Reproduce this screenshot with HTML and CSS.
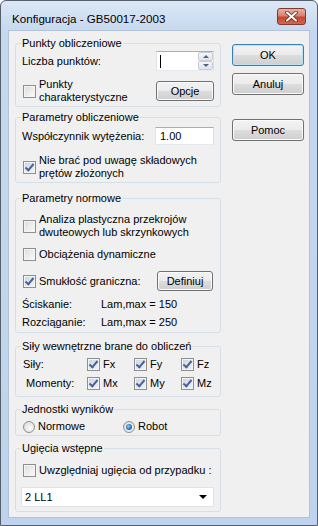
FILE: index.html
```html
<!DOCTYPE html>
<html lang="pl">

<head>
  <meta charset="UTF-8">
  <title>Konfiguracja - GB50017-2003</title>
  <link rel="stylesheet" href="styles.css">
</head>

<body>
  <div class="window">
    <div class="titlebar">
      <span class="title">Konfiguracja - GB50017-2003</span>
      <span class="close">
        <svg width="13" height="11" viewBox="0 0 13 11">
          <path d="M2 1.5 L11 9.5 M11 1.5 L2 9.5" stroke="#5a2a22" stroke-width="3.6" stroke-linecap="round" />
          <path d="M2 1.5 L11 9.5 M11 1.5 L2 9.5" stroke="#fff" stroke-width="2" stroke-linecap="round" />
        </svg>
      </span>
    </div>

    <div class="client">
      <div class="groups">

        <fieldset class="group g-points">
          <legend>Punkty obliczeniowe</legend>
          <div class="row">
            <span>Liczba punktów:</span>
            <div class="spin">
              <span class="caret"></span>
              <div class="spin-btns">
                <span class="spin-btn"><i class="arr-up"></i></span>
                <span class="spin-btn"><i class="arr-down"></i></span>
              </div>
            </div>
          </div>
          <div class="row row-chars">
            <label class="chk"><span class="box"></span><span>Punkty<br>charakterystyczne</span></label>
            <button class="btn btn-small">Opcje</button>
          </div>
        </fieldset>

        <fieldset class="group g-calc">
          <legend>Parametry obliczeniowe</legend>
          <div class="row">
            <span>Współczynnik wytężenia:</span>
            <div class="textbox">1.00</div>
          </div>
          <label class="chk chk-bars"><span class="box on"></span><span>Nie brać pod uwagę składowych<br>prętów złożonych</span></label>
        </fieldset>

        <fieldset class="group g-code">
          <legend>Parametry normowe</legend>
          <label class="chk chk-plastic"><span class="box"></span><span>Analiza plastyczna przekrojów<br>dwuteowych lub skrzynkowych</span></label>
          <label class="chk chk-dyn"><span class="box"></span><span>Obciążenia dynamiczne</span></label>
          <div class="row row-slender">
            <label class="chk"><span class="box on"></span><span>Smukłość graniczna:</span></label>
            <button class="btn btn-def">Definiuj</button>
          </div>
          <div class="lam lam-first"><span>Ściskanie:</span><span>Lam,max = 150</span></div>
          <div class="lam lam-second"><span>Rozciąganie:</span><span>Lam,max = 250</span></div>
        </fieldset>

        <fieldset class="group g-forces">
          <legend>Siły wewnętrzne brane do obliczeń</legend>
          <div class="forces">
            <span>Siły:</span>
            <label class="chk"><span class="box on"></span><span>Fx</span></label>
            <label class="chk"><span class="box on"></span><span>Fy</span></label>
            <label class="chk"><span class="box on"></span><span>Fz</span></label>
          </div>
          <div class="forces forces-moments">
            <span class="moments-label">Momenty:</span>
            <label class="chk"><span class="box on"></span><span>Mx</span></label>
            <label class="chk"><span class="box on"></span><span>My</span></label>
            <label class="chk"><span class="box on"></span><span>Mz</span></label>
          </div>
        </fieldset>

        <fieldset class="group g-units">
          <legend>Jednostki wyników</legend>
          <div class="radios">
            <label class="chk"><span class="radio"></span><span>Normowe</span></label>
            <label class="chk"><span class="radio on"></span><span>Robot</span></label>
          </div>
        </fieldset>

        <fieldset class="group g-defl">
          <legend>Ugięcia wstępne</legend>
          <label class="chk chk-defl"><span class="box"></span><span>Uwzględniaj ugięcia od przypadku :</span></label>
          <div class="select">
            <span>2 LL1</span>
            <i class="arr-drop"></i>
          </div>
        </fieldset>

      </div>

      <div class="buttons">
        <button class="btn btn-ok">OK</button>
        <button class="btn btn-cancel">Anuluj</button>
        <button class="btn btn-help">Pomoc</button>
      </div>
    </div>
  </div>
</body>

</html>
```

FILE: styles.css
```css
body {
  margin: 0;
  background: #fff;
  font-family: "Liberation Sans", Arial, sans-serif;
  font-size: 11px;
  line-height: 13px;
  color: #000;
}

.window {
  width: 318px;
  height: 526px;
  box-sizing: border-box;
  border: 1px solid #56606c;
  border-radius: 6px 6px 0 0;
  background: linear-gradient(#dbe7f6, #c6d8ef 30px, #bfd3ec);
  display: flex;
  flex-direction: column;
}

.titlebar {
  height: 29px;
  display: flex;
  justify-content: space-between;
  align-items: flex-start;
  padding: 0 11px;
}

.title {
  font-size: 11.6px;
  margin-top: 11px;
}

.close {
  margin-top: 7px;
  width: 29px;
  height: 17px;
  box-sizing: border-box;
  border: 1px solid #7d3a2e;
  border-radius: 3px;
  background: linear-gradient(#e8b1a4, #d8836f 45%, #c5482f 55%, #d2674d);
  display: flex;
  align-items: center;
  justify-content: center;
}

.client {
  margin: 0 7px;
  height: 488px;
  box-sizing: border-box;
  border: 1px solid #b3c3d7;
  background: #f0f0f0;
  padding: 6px 6px 0 6px;
  display: flex;
  gap: 11px;
}

.groups {
  width: 206px;
  display: flex;
  flex-direction: column;
}

.group {
  margin: 0;
  padding: 0 6px;
  border: 1px solid #d5dfe5;
  border-radius: 3px;
  min-width: 0;
}

.group legend {
  padding: 0 1px;
  margin-left: -1px;
  line-height: 13px;
}

.row {
  display: flex;
  justify-content: space-between;
  align-items: center;
}

.chk {
  display: flex;
  align-items: center;
  gap: 3px;
}

.box {
  width: 13px;
  height: 13px;
  box-sizing: border-box;
  border: 1px solid #8e8f8f;
  background: linear-gradient(135deg, #dcdcdc, #fbfbfb);
  box-shadow: inset 0 0 0 1px #f4f4f4;
  margin-left: 1px;
  flex-shrink: 0;
  position: relative;
}

.box.on {
  background: linear-gradient(135deg, #c9d3e0, #f3f6fa);
}

.box.on::after {
  content: "";
  position: absolute;
  left: 3px;
  top: 0px;
  width: 3px;
  height: 7px;
  border: solid #4a6296;
  border-width: 0 2px 2px 0;
  transform: rotate(40deg);
}

.radio {
  width: 12px;
  height: 12px;
  box-sizing: border-box;
  border: 1px solid #8e8f8f;
  border-radius: 50%;
  background: radial-gradient(circle at 60% 60%, #fbfbfb, #d4d4d4);
  margin-left: 1px;
  flex-shrink: 0;
  position: relative;
}

.radio.on::after {
  content: "";
  position: absolute;
  left: 2px;
  top: 2px;
  width: 6px;
  height: 6px;
  border-radius: 50%;
  background: radial-gradient(circle at 40% 40%, #8ad2f5, #1d6fb3 60%, #15446e);
}

.btn {
  width: 72px;
  height: 22px;
  padding: 0;
  box-sizing: border-box;
  border: 1px solid #707070;
  border-radius: 3px;
  background: linear-gradient(#f2f2f2, #ebebeb 50%, #dddddd 50%, #cfcfcf);
  box-shadow: inset 0 0 0 1px #fcfcfc;
  font-family: inherit;
  font-size: 11px;
  color: #000;
}

.btn-small {
  width: 58px;
  height: 20px;
}

.btn-def {
  width: 56px;
  height: 20px;
  margin-right: 1px;
}

.spin {
  width: 58px;
  height: 20px;
  box-sizing: border-box;
  border: 1px solid #abadb3;
  border-color: #abadb3 #dbdfe6 #e3e9ef #e2e3ea;
  background: #fff;
  display: flex;
  justify-content: space-between;
  align-items: center;
}

.caret {
  width: 1px;
  height: 13px;
  background: #000;
  margin-left: 3px;
}

.spin-btns {
  width: 15px;
  height: 18px;
  display: flex;
  flex-direction: column;
}

.spin-btn {
  flex: 1;
  border: 1px solid #c8ccd4;
  border-radius: 2px;
  background: linear-gradient(#f4f6f9, #dfe4ec);
  display: flex;
  align-items: center;
  justify-content: center;
}

.arr-up,
.arr-down,
.arr-drop {
  width: 0;
  height: 0;
  border-left: 3px solid transparent;
  border-right: 3px solid transparent;
}

.arr-up {
  border-bottom: 3px solid #4d6185;
}

.arr-down {
  border-top: 3px solid #4d6185;
}

.textbox {
  width: 59px;
  height: 18px;
  box-sizing: border-box;
  border: 1px solid;
  border-color: #abadb3 #dbdfe6 #e3e9ef #e2e3ea;
  background: #fff;
  padding-left: 4px;
  line-height: 16px;
}

/* group spacing */
.g-points .row:first-of-type {
  margin-top: 1px;
}

.row-chars {
  margin-top: 7px;
  margin-bottom: 2px;
}

.g-calc {
  margin-top: 4px;
}

.g-calc .row {
  margin-top: 3px;
}

.chk-bars {
  margin-top: 9px;
  margin-bottom: 2px;
}

.g-code {
  margin-top: 9px;
}

.chk-plastic {
  margin-top: 8px;
}

.chk-dyn {
  margin-top: 9px;
}

.row-slender {
  margin-top: 10px;
}

.lam {
  display: flex;
}

.lam span:first-child {
  width: 79px;
}

.lam-first {
  margin-top: 7px;
}

.lam-second {
  margin-top: 5px;
  margin-bottom: 3px;
}

.g-forces {
  margin-top: 7px;
}

.forces {
  display: grid;
  grid-template-columns: 63px 47px 47px auto;
  align-items: center;
  margin-top: 5px;
  padding-left: 1px;
}

.forces-moments {
  margin-top: 6px;
  margin-bottom: 6px;
}

.moments-label {
  margin-left: 3px;
}

.g-units {
  margin-top: 6px;
}

.radios {
  display: grid;
  grid-template-columns: 100px auto;
  margin-top: 4px;
  margin-bottom: 2px;
}

.g-defl {
  margin-top: 6px;
}

.chk-defl {
  margin-top: 9px;
}

.select {
  margin: 10px 0 4px -1px;
  width: 193px;
  height: 20px;
  box-sizing: border-box;
  border: 1px solid #e0e3e8;
  background: #fff;
  display: flex;
  justify-content: space-between;
  align-items: center;
  padding: 0 6px 0 3px;
}

.arr-drop {
  border-left-width: 4px;
  border-right-width: 4px;
  border-top: 4px solid #000;
}

.buttons {
  display: flex;
  flex-direction: column;
  padding-top: 7px;
}

.btn-ok {
  border-color: #3c7fb1;
  box-shadow: inset 0 0 0 1px #b9e2f8;
}

.btn-cancel {
  margin-top: 7px;
}

.btn-help {
  margin-top: 24px;
}
```
